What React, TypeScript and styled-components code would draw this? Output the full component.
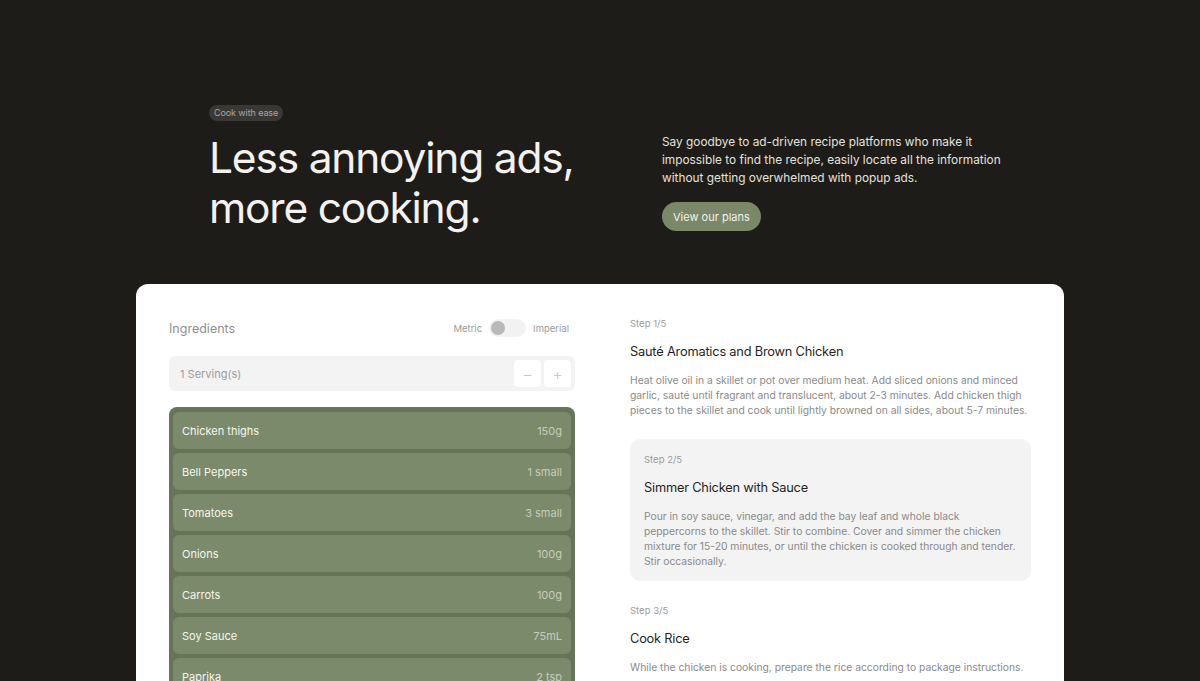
import React, { useState } from 'react'
import styled, { createGlobalStyle } from 'styled-components'

const GlobalStyle = createGlobalStyle`
  html, body {
    margin: 0;
    padding: 0;
    background: #1e1c19;
    font-family: Inter, "Noto Sans", sans-serif;
    overflow: hidden;
  }
`

const Page = styled.div`
  width: 1200px;
  height: 681px;
  overflow: hidden;
  background: #1e1c19;
`

const Hero = styled.section`
  display: grid;
  grid-template-columns: 453px 342px;
  padding: 105px 0 0 209px;
  height: 179px;
`

const HeroLeft = styled.div`
  display: flex;
  flex-direction: column;
  align-items: flex-start;
`

const Badge = styled.span`
  background: #3a3835;
  color: #a9a6a1;
  font-size: 9px;
  line-height: 16px;
  padding: 0 5px;
  border-radius: 8px;
  letter-spacing: -0.1px;
`

const Headline = styled.h1`
  margin: 12px 0 0;
  color: #f4f2ee;
  font-size: 42.5px;
  font-weight: 400;
  line-height: 50px;
  letter-spacing: -1.2px;
`

const HeroRight = styled.div`
  padding-top: 28px;
`

const Lead = styled.p`
  margin: 0;
  color: #e4e1dc;
  font-size: 11.85px;
  line-height: 18px;
`

const PlansButton = styled.button`
  margin-top: 15px;
  height: 29px;
  padding: 0 11px;
  border: none;
  border-radius: 15px;
  background: #7a8769;
  color: #f1f1ea;
  font-family: inherit;
  font-size: 11px;
`

const Card = styled.main`
  margin: 0 136px;
  background: #ffffff;
  border-radius: 12px 12px 0 0;
  display: grid;
  grid-template-columns: 406px 401px;
  column-gap: 55px;
  padding: 19px 33px 0;
  height: 400px;
`

const LeftCol = styled.div`
  padding-top: 13px;
`

const HeaderRow = styled.div`
  display: flex;
  align-items: center;
  justify-content: space-between;
  height: 24px;
`

const SectionLabel = styled.span`
  color: #8f8f8f;
  font-size: 12.5px;
`

const UnitSwitch = styled.div`
  display: flex;
  align-items: center;
  gap: 7px;
  margin-right: 6px;
  color: #9a9a9a;
  font-size: 9.5px;
`

const Track = styled.div<{ $on: boolean }>`
  width: 37px;
  height: 18px;
  border-radius: 9px;
  background: #f2f2f2;
  display: flex;
  align-items: center;
  padding: 0 2px;
  box-sizing: border-box;
  justify-content: ${(p) => (p.$on ? 'flex-end' : 'flex-start')};
  cursor: pointer;
`

const Knob = styled.div`
  width: 14px;
  height: 14px;
  border-radius: 50%;
  background: #b9b9b9;
`

const ServingBar = styled.div`
  margin-top: 16px;
  height: 35px;
  background: #f3f3f3;
  border-radius: 6px;
  display: flex;
  align-items: center;
  justify-content: space-between;
  padding: 0 4px 0 11px;
  color: #9d9d9d;
  font-size: 11px;
`

const Steppers = styled.div`
  display: flex;
  gap: 3px;
`

const StepBtn = styled.button`
  width: 27px;
  height: 27px;
  border: none;
  border-radius: 4px;
  background: #ffffff;
  color: #c7c7c7;
  font-size: 16px;
  font-weight: 300;
  padding: 0;
  display: flex;
  align-items: center;
  justify-content: center;
  font-family: inherit;
`

const IngredientList = styled.ul`
  list-style: none;
  margin: 16px 0 0;
  padding: 5px 4px;
  background: #667457;
  border-radius: 8px;
  display: flex;
  flex-direction: column;
  gap: 4px;
`

const Ingredient = styled.li`
  height: 37px;
  background: #7c8a6c;
  border-radius: 6px;
  display: flex;
  align-items: center;
  justify-content: space-between;
  padding: 0 9px;
  font-size: 11px;
  color: #f5f5ee;
`

const Amount = styled.span`
  color: #c6ccbb;
`

const RightCol = styled.div`
  display: flex;
  flex-direction: column;
  gap: 9px;
`

const Step = styled.article<{ $active?: boolean }>`
  padding: 14px ${(p) => (p.$active ? '10px' : '0')} 12px ${(p) => (p.$active ? '14px' : '0')};
  border-radius: 10px;
  background: ${(p) => (p.$active ? '#f3f3f3' : 'transparent')};
`

const StepLabel = styled.div`
  color: #9b9b9b;
  font-size: 9.5px;
  line-height: 14px;
`

const StepTitle = styled.h3`
  margin: 11px 0 0;
  color: #1f1f1f;
  font-size: 12.8px;
  font-weight: 400;
  line-height: 20px;
  letter-spacing: -0.2px;
`

const StepText = styled.p`
  margin: 11px 0 0;
  color: #8a8a8a;
  font-size: 10.3px;
  line-height: 15px;
`

const ingredients = [
  ['Chicken thighs', '150g'],
  ['Bell Peppers', '1 small'],
  ['Tomatoes', '3 small'],
  ['Onions', '100g'],
  ['Carrots', '100g'],
  ['Soy Sauce', '75mL'],
  ['Paprika', '2 tsp'],
]

const steps = [
  {
    title: 'Sauté Aromatics and Brown Chicken',
    text: 'Heat olive oil in a skillet or pot over medium heat. Add sliced onions and minced garlic, sauté until fragrant and translucent, about 2-3 minutes. Add chicken thigh pieces to the skillet and cook until lightly browned on all sides, about 5-7 minutes.',
  },
  {
    title: 'Simmer Chicken with Sauce',
    text: 'Pour in soy sauce, vinegar, and add the bay leaf and whole black peppercorns to the skillet. Stir to combine. Cover and simmer the chicken mixture for 15-20 minutes, or until the chicken is cooked through and tender. Stir occasionally.',
  },
  {
    title: 'Cook Rice',
    text: 'While the chicken is cooking, prepare the rice according to package instructions.',
  },
]

export default function App() {
  const [imperial, setImperial] = useState(false)
  const [servings, setServings] = useState(1)

  return (
    <Page>
      <GlobalStyle />
      <Hero>
        <HeroLeft>
          <Badge>Cook with ease</Badge>
          <Headline>
            Less annoying ads,
            <br />
            more cooking.
          </Headline>
        </HeroLeft>
        <HeroRight>
          <Lead>
            Say goodbye to ad-driven recipe platforms who make it impossible to find the recipe, easily
            locate all the information without getting overwhelmed with popup ads.
          </Lead>
          <PlansButton>View our plans</PlansButton>
        </HeroRight>
      </Hero>

      <Card>
        <LeftCol>
          <HeaderRow>
            <SectionLabel>Ingredients</SectionLabel>
            <UnitSwitch>
              <span>Metric</span>
              <Track $on={imperial} onClick={() => setImperial(!imperial)}>
                <Knob />
              </Track>
              <span>Imperial</span>
            </UnitSwitch>
          </HeaderRow>
          <ServingBar>
            <span>{servings} Serving(s)</span>
            <Steppers>
              <StepBtn onClick={() => setServings(Math.max(1, servings - 1))}>−</StepBtn>
              <StepBtn onClick={() => setServings(servings + 1)}>+</StepBtn>
            </Steppers>
          </ServingBar>
          <IngredientList>
            {ingredients.map(([name, amount]) => (
              <Ingredient key={name}>
                <span>{name}</span>
                <Amount>{amount}</Amount>
              </Ingredient>
            ))}
          </IngredientList>
        </LeftCol>

        <RightCol>
          {steps.map((s, i) => (
            <Step key={s.title} $active={i === 1}>
              <StepLabel>Step {i + 1}/5</StepLabel>
              <StepTitle>{s.title}</StepTitle>
              <StepText>{s.text}</StepText>
            </Step>
          ))}
        </RightCol>
      </Card>
    </Page>
  )
}
